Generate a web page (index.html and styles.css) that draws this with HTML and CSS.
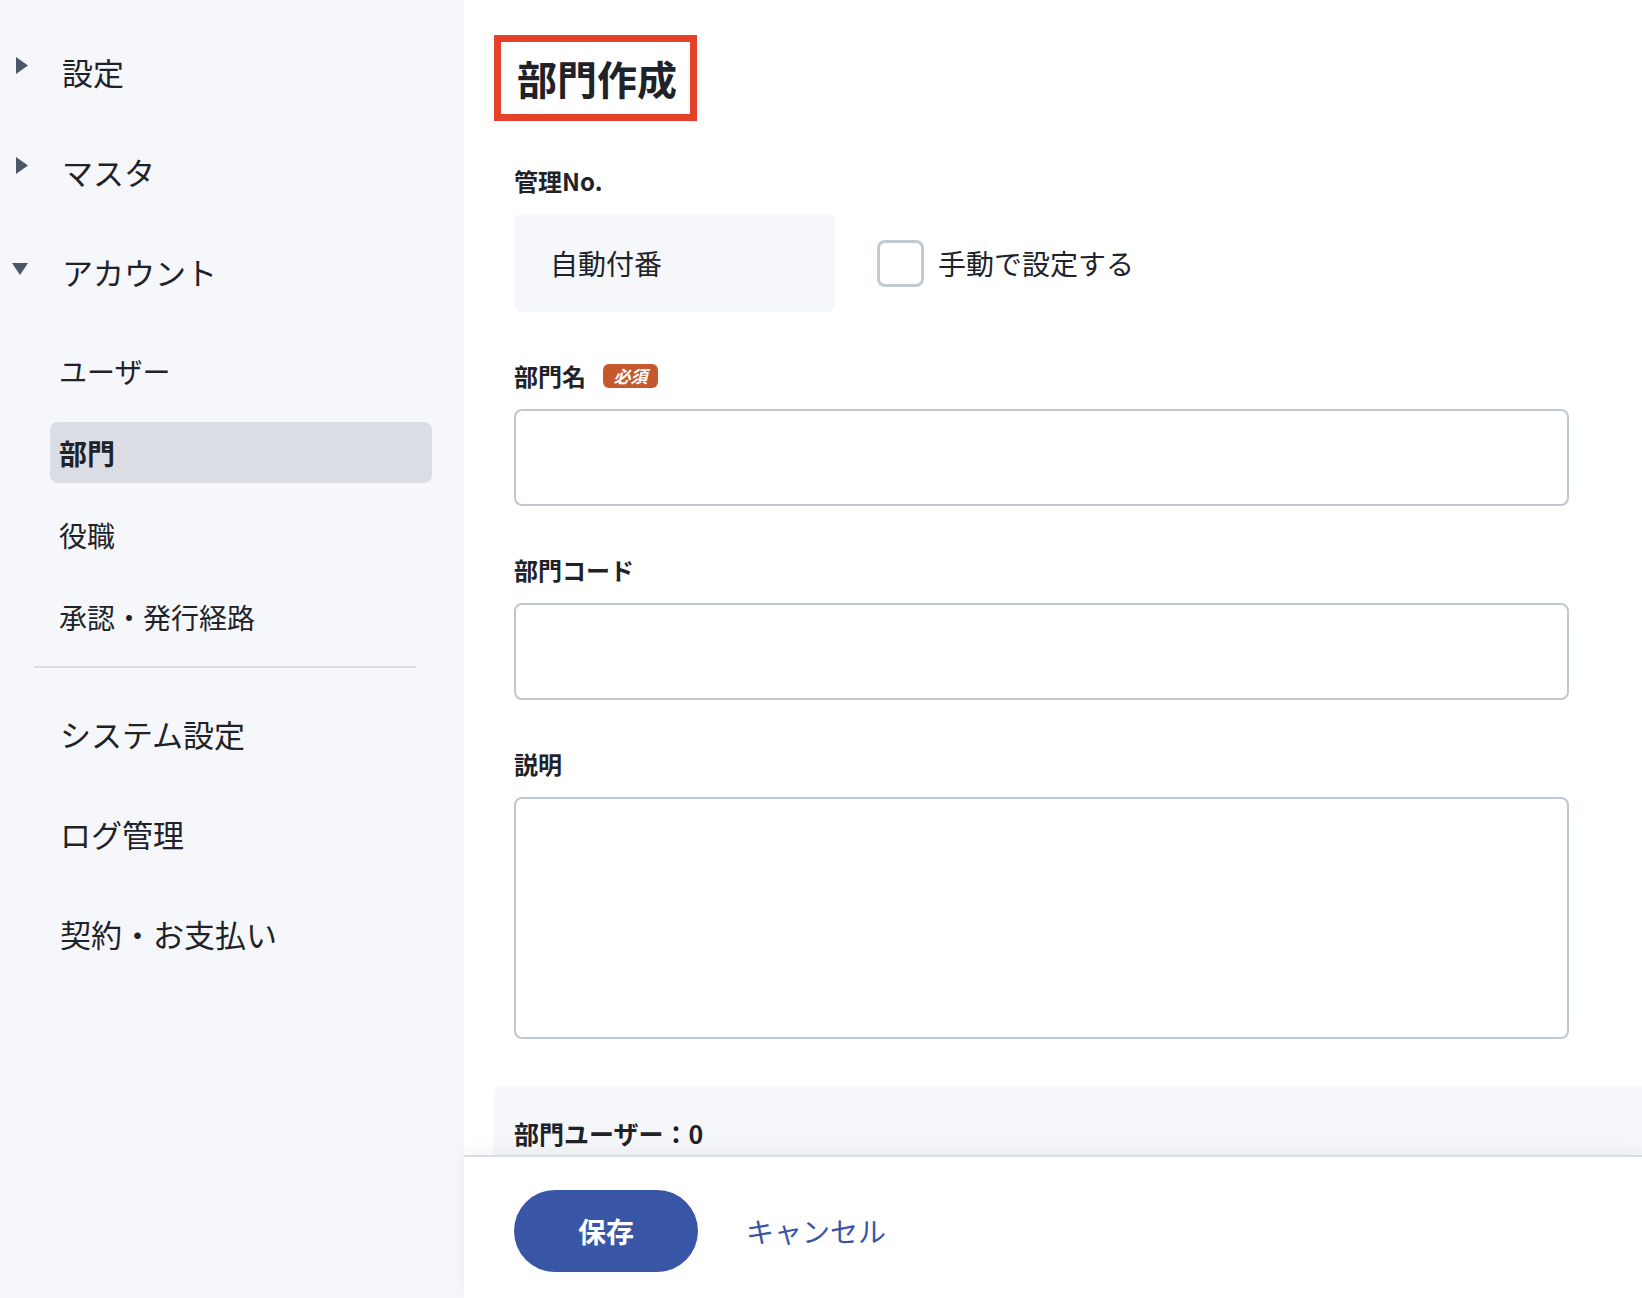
FILE: index.html
```html
<!DOCTYPE html>
<html lang="ja">
<head>
  <meta charset="UTF-8">
  <meta name="viewport" content="width=device-width, initial-scale=1.0">
  <title>部門作成</title>
  <link rel="stylesheet" href="styles.css">
</head>
<body>
  <nav class="sidebar">
    <div class="menu-row">
      <svg class="caret" width="12" height="17" viewBox="0 0 12 17"><polygon points="0,0 12,8.5 0,17" /></svg>
      <span>設定</span>
    </div>
    <div class="menu-row">
      <svg class="caret" width="12" height="17" viewBox="0 0 12 17"><polygon points="0,0 12,8.5 0,17" /></svg>
      <span>マスタ</span>
    </div>
    <div class="menu-row">
      <svg class="caret down" width="16" height="12" viewBox="0 0 16 12"><polygon points="0,0 16,0 8,12" /></svg>
      <span>アカウント</span>
    </div>

    <ul class="submenu">
      <li>ユーザー</li>
      <li class="active">部門</li>
      <li>役職</li>
      <li>承認・発行経路</li>
    </ul>

    <hr class="divider">

    <div class="menu-row plain"><span>システム設定</span></div>
    <div class="menu-row plain"><span>ログ管理</span></div>
    <div class="menu-row plain"><span>契約・お支払い</span></div>
  </nav>

  <main class="main">
    <div class="content">
      <h1 class="title">部門作成</h1>

      <div class="form">
        <div class="field">
          <div class="label">管理No.</div>
          <div class="number-row">
            <div class="auto-box">自動付番</div>
            <label class="manual">
              <input type="checkbox" class="check">
              <span>手動で設定する</span>
            </label>
          </div>
        </div>

        <div class="field">
          <div class="label">部門名 <span class="badge">必須</span></div>
          <input type="text" class="input">
        </div>

        <div class="field">
          <div class="label">部門コード</div>
          <input type="text" class="input">
        </div>

        <div class="field">
          <div class="label">説明</div>
          <textarea class="input textarea"></textarea>
        </div>
      </div>

      <div class="users-panel">
        <div class="label">部門ユーザー：0</div>
      </div>
    </div>

    <footer class="footer">
      <button class="save-btn">保存</button>
      <a href="#" class="cancel">キャンセル</a>
    </footer>
  </main>
</body>
</html>
```

FILE: styles.css
```css
* {
  box-sizing: border-box;
}

body {
  margin: 0;
  height: 100vh;
  display: flex;
  font-family: "Noto Sans CJK JP", "Noto Sans", sans-serif;
  color: #1f2329;
  background: #fff;
  overflow: hidden;
}

/* sidebar */
.sidebar {
  width: 464px;
  flex-shrink: 0;
  background: #f5f7fa;
  padding-top: 21px;
}

.menu-row {
  height: 100px;
  display: flex;
  align-items: center;
  padding-left: 16px;
  font-size: 31px;
}

.menu-row span {
  margin-left: 34px;
}

.menu-row.plain {
  padding-left: 60px;
}

.menu-row.plain span {
  margin-left: 0;
}

.caret {
  fill: #4b5668;
  margin-bottom: 11px;
}

.caret.down {
  margin-left: -4px;
  margin-bottom: 4px;
}

.submenu {
  list-style: none;
  margin: 0;
  padding: 19px 0 0 0;
}

.submenu li {
  height: 61px;
  margin: 0 32px 21px 50px;
  padding-left: 9px;
  display: flex;
  align-items: center;
  font-size: 28px;
  border-radius: 8px;
}

.submenu li:last-child {
  margin-bottom: 0;
}

.submenu li.active {
  background: #dadee4;
  font-weight: bold;
}

.divider {
  border: none;
  border-top: 2px solid #d9dde3;
  margin: 19px 48px 15px 34px;
}

/* main */
.main {
  flex: 1;
  display: flex;
  flex-direction: column;
  min-width: 0;
}

.content {
  flex: 1;
  overflow: hidden;
  padding: 35px 0 0 30px;
}

.title {
  display: inline-block;
  margin: 0;
  border: 7px solid #e8412a;
  padding: 12px 13px 12px 16px;
  font-size: 40px;
  line-height: 48px;
  font-weight: bold;
}

.form {
  padding: 0 73px 0 20px;
  margin-top: 44px;
}

.field {
  margin-bottom: 48px;
}

.field:last-child {
  margin-bottom: 0;
}

.label {
  font-size: 24px;
  line-height: 32px;
  font-weight: bold;
  display: flex;
  align-items: center;
  margin-bottom: 17px;
}

.badge {
  margin-left: 17px;
  width: 55px;
  height: 24px;
  border-radius: 6px;
  background: #c5592d;
  color: #fff;
  font-size: 17px;
  line-height: 24px;
  font-style: italic;
  font-weight: bold;
  text-align: center;
}

.number-row {
  display: flex;
  align-items: center;
}

.auto-box {
  width: 321px;
  height: 98px;
  background: #f5f7fa;
  border-radius: 8px;
  padding-left: 36px;
  display: flex;
  align-items: center;
  font-size: 28px;
}

.manual {
  display: flex;
  align-items: center;
  margin-left: 42px;
  font-size: 28px;
}

.check {
  appearance: none;
  -webkit-appearance: none;
  width: 47px;
  height: 47px;
  margin: 0 14px 0 0;
  border: 3px solid #c3c9d1;
  border-radius: 8px;
  background: #fff;
}

.input {
  display: block;
  width: 100%;
  height: 97px;
  border: 2px solid #c1c7d0;
  border-radius: 8px;
  background: #fff;
  font: inherit;
  font-size: 27px;
  padding: 0 20px;
}

.textarea {
  height: 242px;
  resize: none;
}

.users-panel {
  margin-top: 47px;
  background: #f5f7fa;
  border-radius: 8px 0 0 0;
  padding: 31px 20px;
}

.users-panel .label {
  font-size: 25px;
}

/* footer */
.footer {
  height: 143px;
  flex-shrink: 0;
  border-top: 2px solid #d9dde3;
  box-shadow: 0 -6px 14px rgba(30, 40, 60, 0.05);
  background: #fff;
  display: flex;
  align-items: flex-start;
  padding: 33px 0 0 50px;
  position: relative;
}

.save-btn {
  width: 184px;
  height: 82px;
  border: none;
  border-radius: 41px;
  background: #3955a6;
  color: #fff;
  font: inherit;
  font-size: 28px;
  font-weight: bold;
  cursor: pointer;
}

.cancel {
  margin-left: 48px;
  height: 82px;
  display: flex;
  align-items: center;
  font-size: 28px;
  color: #3955a6;
  text-decoration: none;
}
```
